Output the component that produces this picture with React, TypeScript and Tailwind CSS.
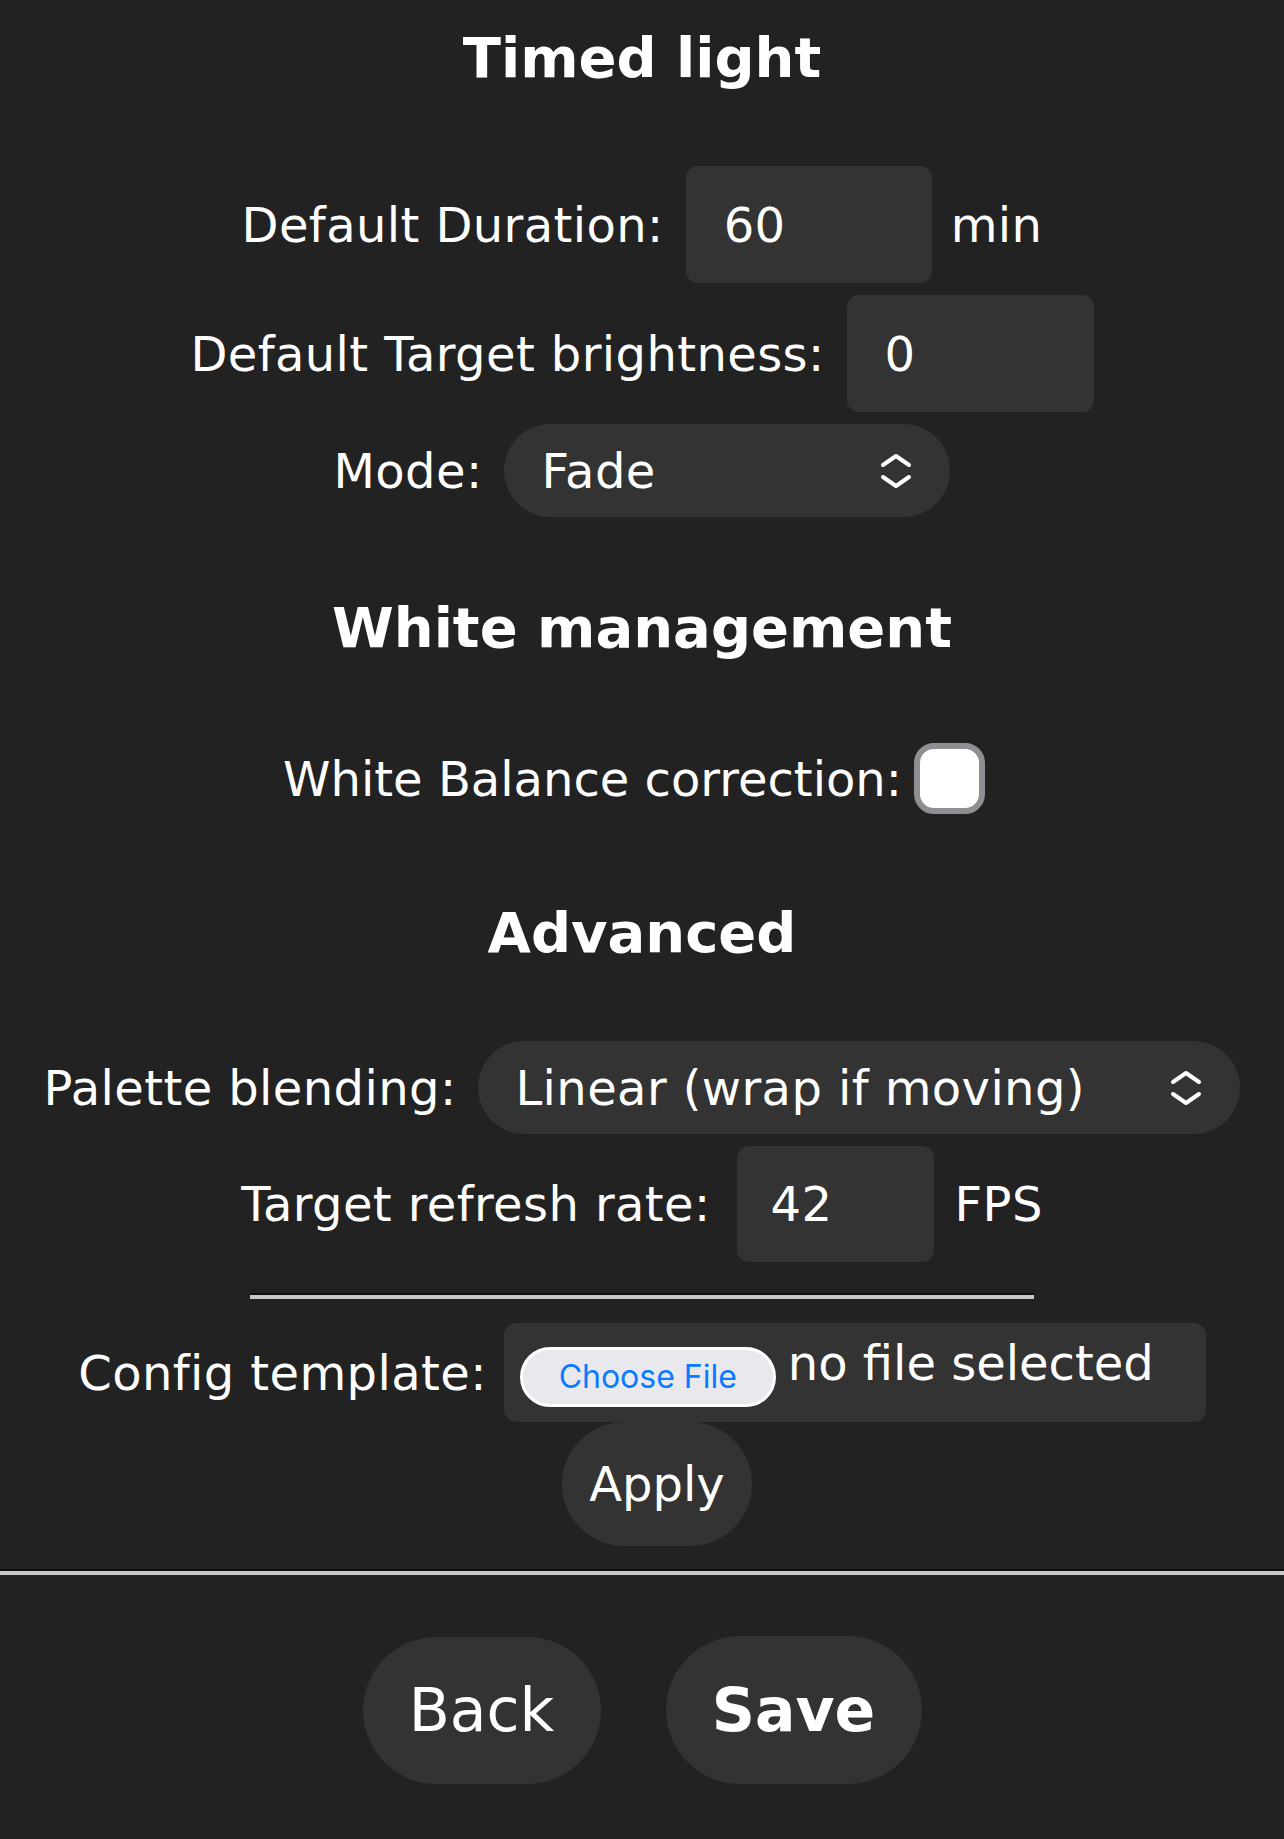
const Chevrons = () => (
  <svg width="32" height="36" viewBox="0 0 32 36" fill="none" stroke="white" strokeWidth="4" strokeLinecap="round" strokeLinejoin="round">
    <polyline points="3,12 16,3 29,12" />
    <polyline points="3,24 16,33 29,24" />
  </svg>
);

function NumberField({ value, width }: { value: string; width: string }) {
  return (
    <input
      readOnly
      value={value}
      className={`h-[117px] ${width} rounded-[12px] bg-[#333333] pl-[38px] text-white outline-none`}
    />
  );
}

function SelectField({ value, width }: { value: string; width: string }) {
  return (
    <div className={`flex h-[93px] ${width} items-center justify-between rounded-full bg-[#333333] pl-[37px] pr-[38px]`}>
      <span>{value}</span>
      <Chevrons />
    </div>
  );
}

function Heading({ children, className }: { children: string; className: string }) {
  return <h3 className={`text-[56px] font-bold leading-[65px] tracking-normal ${className}`}>{children}</h3>;
}

export default function App() {
  return (
    <div className="flex min-h-[1839px] flex-col items-center bg-[#222222] font-['DejaVu_Sans',sans-serif] text-[48px] leading-[56px] tracking-[0.4px] text-white">
      <Heading className="mt-[25px]">Timed light</Heading>

      <div className="mt-[76px] flex flex-col items-center gap-[12px]">
        <div className="flex items-center">
          <span className="mr-[22px]">Default Duration:</span>
          <NumberField value="60" width="w-[246px]" />
          <span className="ml-[19px]">min</span>
        </div>
        <div className="flex items-center">
          <span className="mr-[22px]">Default Target brightness:</span>
          <NumberField value="0" width="w-[247px]" />
        </div>
        <div className="flex items-center">
          <span className="mr-[22px]">Mode:</span>
          <SelectField value="Fade" width="w-[446px]" />
        </div>
      </div>

      <Heading className="mt-[78px]">White management</Heading>

      <div className="mt-[83px] flex items-center tracking-normal">
        <span className="mr-[12px]">White Balance correction:</span>
        <div className="mr-[16px] h-[71px] w-[71px] rounded-[20px] border-[6px] border-[#8e8e93] bg-white" />
      </div>

      <Heading className="mt-[86px]">Advanced</Heading>

      <div className="mt-[76px] flex flex-col items-center gap-[12px]">
        <div className="flex items-center">
          <span className="mr-[22px]">Palette blending:</span>
          <SelectField value="Linear (wrap if moving)" width="w-[762px]" />
        </div>
        <div className="flex items-center">
          <span className="mr-[26px]">Target refresh rate:</span>
          <input
            readOnly
            value="42"
            className="h-[116px] w-[197px] rounded-[12px] bg-[#333333] pl-[34px] text-white outline-none"
          />
          <span className="ml-[21px]">FPS</span>
        </div>
      </div>

      <hr className="mt-[31px] h-0 w-[784px] border-t-[2px] border-b-[4px] border-t-[#111111] border-b-[#c8c8c8]" />

      <div className="mt-[24px] flex items-center">
        <span className="mr-[17px]">Config template:</span>
        <div className="flex h-[99px] w-[702px] items-start rounded-[12px] bg-[#333333] pl-[16px] tracking-normal">
          <button className="mt-[24px] flex h-[60px] w-[256px] items-center justify-center rounded-full border-[3px] border-white bg-[#e9e9ed] font-['Inter',sans-serif] text-[32px] leading-[40px] text-[#0a7aff]">
            Choose File
          </button>
          <span className="ml-[12px] mt-[12px]">no file selected</span>
        </div>
      </div>

      <button className="ml-[30px] flex h-[124px] w-[190px] items-center justify-center rounded-full bg-[#333333] tracking-normal">
        Apply
      </button>

      <hr className="mt-[23px] h-0 w-full border-t-[2px] border-b-[4px] border-t-[#111111] border-b-[#c8c8c8]" />

      <div className="mt-[61px] flex items-center gap-[65px]">
        <button className="flex h-[147px] w-[238px] items-center justify-center rounded-full bg-[#333333] text-[60px] leading-[70px] tracking-normal">
          Back
        </button>
        <button className="flex h-[148px] w-[256px] items-center justify-center rounded-full bg-[#333333] text-[60px] font-bold leading-[70px] tracking-normal">
          Save
        </button>
      </div>
    </div>
  );
}
